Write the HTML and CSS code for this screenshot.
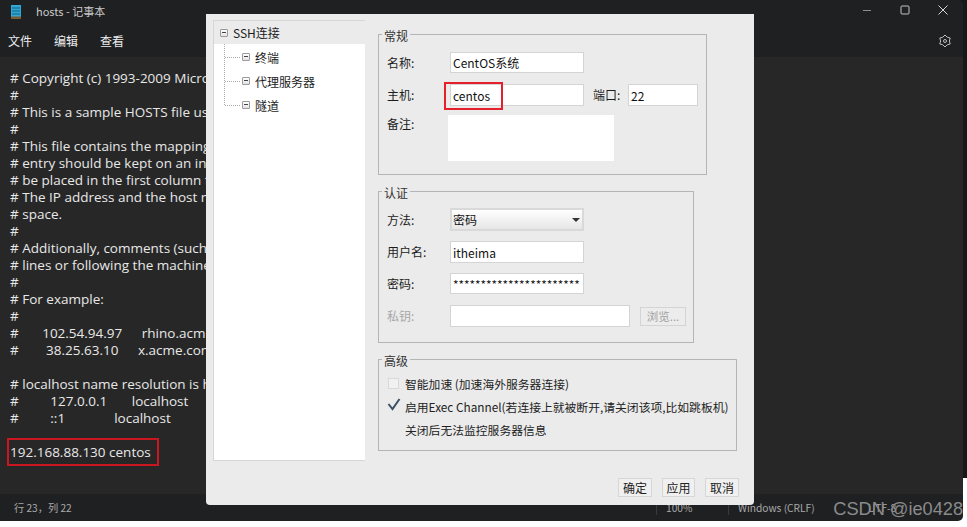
FILE: index.html
```html
<!DOCTYPE html>
<html lang="zh">
<head>
<meta charset="utf-8">
<title>hosts - 记事本</title>
<link rel="stylesheet" href="styles.css">
</head>
<body>
<div class="screen">
  <div class="behind"></div>
  <div class="notepad">
    <header class="titlebar">
      <svg class="app-icon" width="10" height="14" viewBox="0 0 10 14"><rect x="0" y="0" width="10" height="14" fill="#2fa8d8"/><rect x="0" y="11.500" width="10" height="2.500" fill="#7a5a32"/><path d="M1 3h8M1 6h8M1 9h8" stroke="#135f7e" stroke-width="1"/></svg>
      <span class="title">hosts - 记事本</span>
      <div class="winctl">
        <svg width="12" height="12" viewBox="0 0 12 12"><path d="M2 6.500h8" stroke="#8d8d8d"/></svg>
        <svg width="12" height="12" viewBox="0 0 12 12"><rect x="2" y="2" width="8" height="8" rx="1" fill="none" stroke="#c4c4c4"/></svg>
        <svg width="12" height="12" viewBox="0 0 12 12"><path d="M1.500 1.500l9 9M10.500 1.500l-9 9" stroke="#d8d8d8"/></svg>
      </div>
    </header>
    <nav class="menubar">
      <span>文件</span><span>编辑</span><span>查看</span>
      <svg class="gear" width="14" height="14" viewBox="0 0 14 14"><path d="M7 1L9.200 3.200 12.200 4 11.400 7 12.200 10 9.200 10.800 7 13 4.800 10.800 1.800 10 2.600 7 1.800 4 4.800 3.200z" fill="none" stroke="#bdbdbd" stroke-linejoin="round"/><circle cx="7" cy="7" r="1.500" fill="none" stroke="#bdbdbd"/></svg>
    </nav>
    <main class="editor"><pre class="text"># Copyright (c) 1993-2009 Microsoft Corp.
#
# This is a sample HOSTS file used by Microsoft TCP/IP for Windows.
#
# This file contains the mappings of IP addresses to host names. Each
# entry should be kept on an individual line. The IP address should
# be placed in the first column followed by the corresponding host name.
# The IP address and the host name should be separated by at least one
# space.
#
# Additionally, comments (such as these) may be inserted on individual
# lines or following the machine name denoted by a '#' symbol.
#
# For example:
#
<span class="sample">#      102.54.94.97     rhino.acme.com          # source server
#       38.25.63.10     x.acme.com              # x client host</span>

# localhost name resolution is handled within DNS itself.
#         127.0.0.1       localhost
#         ::1              localhost

<span class="mark">192.168.88.130 centos</span></pre></main>
    <footer class="statusbar">
      <span class="pos">行 23，列 22</span>
      <span class="cell zoom">100%</span>
      <span class="cell crlf">Windows (CRLF)</span>
      <span class="cell enc">UTF-8</span>
    </footer>
  </div>

  <section class="dialog">
    <div class="dialog-top">
      <aside class="tree">
        <div class="tree-root"><i class="box"></i>SSH连接</div>
        <ul class="tree-list">
          <li><i class="box"></i>终端</li>
          <li><i class="box"></i>代理服务器</li>
          <li><i class="box"></i>隧道</li>
        </ul>
      </aside>
      <div class="forms">
        <fieldset class="group general">
          <legend>常规</legend>
          <div class="row r-name"><label>名称:</label><div class="input w134">CentOS系统</div></div>
          <div class="row r-host"><label>主机:</label><div class="input w134 host">centos<span class="redbox"></span></div><label class="port-label">端口:</label><div class="input w70">22</div></div>
          <div class="row r-note"><label>备注:</label><div class="note"></div></div>
        </fieldset>
        <fieldset class="group auth">
          <legend>认证</legend>
          <div class="row r-method"><label>方法:</label><div class="input w134 select">密码<span class="caret"></span></div></div>
          <div class="row r-user"><label>用户名:</label><div class="input w134">itheima</div></div>
          <div class="row r-pass"><label>密码:</label><div class="input w134 pass">***********************</div></div>
          <div class="row r-key"><label class="off">私钥:</label><div class="input w180"></div><button class="browse">浏览...</button></div>
        </fieldset>
        <fieldset class="group adv">
          <legend>高级</legend>
          <div class="check"><span class="cb"></span>智能加速 (加速海外服务器连接)</div>
          <div class="check"><span class="cb on"><svg width="14" height="13" viewBox="0 0 14 13"><path d="M1.500 6l4 5 7-10" fill="none" stroke="#3b5066" stroke-width="2"/></svg></span>启用Exec Channel(若连接上就被断开,请关闭该项,比如跳板机)</div>
          <div class="check plain">关闭后无法监控服务器信息</div>
        </fieldset>
      </div>
    </div>
    <div class="actions"><button class="wide">确定</button><button>应用</button><button class="wide">取消</button></div>
  </section>

  <div class="watermark">CSDN @ie0428</div>
</div>
</body>
</html>
```
FILE: styles.css
```css
* { box-sizing: border-box; }
html, body { margin: 0; padding: 0; background: #fff; }
.screen { position: relative; width: 967px; height: 527px; overflow: hidden; background: #fff; font-family: "Noto Sans CJK SC", "Noto Sans", sans-serif; }
.behind { position: absolute; left: 955px; top: 0; width: 12px; height: 478px; background: #17181a; }

.notepad { position: relative; width: 963px; height: 521px; display: flex; flex-direction: column; background: #1f2022; color: #e6e6e6; border-radius: 0 5px 5px 0; overflow: hidden; }
.titlebar { height: 24px; flex: none; display: flex; align-items: center; padding-left: 11px; }
.app-icon { flex: none; margin-bottom: 1px; }
.title { margin-left: 15px; margin-bottom: 2px; font-size: 11px; color: #c9c9c9; }
.winctl { margin-left: auto; display: flex; gap: 26px; padding-right: 14px; margin-bottom: 4px; }
.menubar { height: 33px; flex: none; display: flex; align-items: center; gap: 22px; padding: 0 11px 0 8px; font-size: 12px; color: #ececec; }
.gear { margin-left: auto; }
.editor { flex: 1; background: #272727; padding: 13px 10px 0; overflow: hidden; }
.text { margin: 0; font-family: "Open Sans", "Noto Sans", sans-serif; font-size: 13.5px; line-height: 17px; color: #e8e8e8; white-space: pre; }
.sample { word-spacing: 0.4px; }
.mark { display: inline-block; position: relative; }
.mark::after { content: ""; position: absolute; left: -3px; top: -6px; width: 148px; height: 24px; border: 2px solid #c9161f; }
.statusbar { height: 27px; flex: none; display: flex; align-items: center; padding-left: 14px; font-size: 10.2px; color: #a9a9a9; }
.pos { width: 642px; }
.cell { border-left: 1px solid #3a3a3a; }
.zoom { padding-left: 9px; width: 72px; }
.crlf { padding-left: 9px; width: 140px; }
.enc { border: 0; }

.dialog { position: absolute; left: 206px; top: 14px; width: 548px; height: 491px; background: #ebebeb; border-radius: 0 0 4px 4px; color: #1c1c1c; font-size: 12px; padding: 6px 0 0 7px; display: flex; flex-direction: column; }
.dialog-top { display: flex; height: 441px; flex: none; }
.tree { width: 152px; flex: none; background: #fff; border-left: 1px solid #d6d6d6; border-top: 1px solid #d6d6d6; border-bottom: 1px solid #d6d6d6; }
.tree-root { height: 23px; background: #ebebeb; display: flex; align-items: center; padding-left: 6px; gap: 5px; }
.tree-list { list-style: none; margin: 0 0 0 10px; padding: 1px 0 0 17px; border-left: 1px dotted #aaa; height: 61px; display: flex; flex-direction: column; }
.tree-list li { height: 24px; flex: none; display: flex; align-items: center; gap: 5px; position: relative; }
.tree-list li::before { content: ""; position: absolute; left: -17px; top: 12px; width: 15px; border-top: 1px dotted #aaa; }
.box { width: 8px; height: 8px; flex: none; border: 1px solid #9b9b9b; border-radius: 1px; background: linear-gradient(#fff, #e2e2e2); position: relative; }
.box::after { content: ""; position: absolute; left: 1px; right: 1px; top: 2px; border-top: 1px solid #444; }

.forms { flex: 1; padding: 4px 0 0 13px; }
.group { margin: 0; padding: 0; border: 1px solid #b5b5b5; display: block; }
.group legend { font-size: 12px; padding: 4px 2px 0; margin-left: -5px; line-height: 16px; color: #333; }
.general { width: 329px; height: 151px; padding-left: 8px; }
.auth { width: 316px; height: 162px; margin-top: 6px; padding-left: 8px; }
.adv { width: 359px; height: 102px; margin-top: 6px; padding: 3px 0 0 9px; }
.adv legend { margin-left: -6px; }
.row { display: flex; align-items: center; }
.row label { width: 63px; flex: none; line-height: 18px; }
.row label.off { color: #a8a8a8; }
.input { height: 22px; background: #fff; border: 1px solid #d4d4d4; padding-left: 2px; display: flex; align-items: center; position: relative; font-size: 12px; color: #111; }
.w134 { width: 134px; }
.w70 { width: 70px; }
.w180 { width: 180px; }
.r-name { margin-top: 8px; }
.r-name .input { height: 21px; }
.r-host { margin-top: 11px; }
.row .port-label { width: 35px; margin-left: 9px; }
.redbox { position: absolute; left: -7px; top: -3px; width: 59px; height: 28px; border: 2px solid #e5202a; }
.r-note { margin-top: 9px; align-items: flex-start; }
.note { width: 166px; height: 46px; background: #fff; margin-left: -2px; }
.r-method { margin-top: 7px; }
.select { height: 23px; background: linear-gradient(#fff, #e6e6e6); border-width: 2px; border-color: #d9d9d9; padding-left: 1px; }
.caret { position: absolute; right: 2px; top: 8px; border: 4px solid transparent; border-top: 4px solid #333; border-bottom: 0; }
.r-user { margin-top: 10px; }
.r-pass { margin-top: 10px; }
.pass { height: 21px; font-size: 11.8px; }
.r-key { margin-top: 11px; }
.browse { width: 46px; height: 19px; margin-left: 10px; padding: 0; border: 1px solid #d4d4d4; background: #ececec; font: inherit; font-size: 11.5px; color: #a0a0a0; }
.check { display: flex; align-items: center; height: 23px; font-size: 11.8px; color: #222; white-space: nowrap; }
.check.plain { padding-left: 17px; }
.cb { width: 11px; height: 11px; flex: none; margin-right: 6px; background: #f1f1f1; border: 1px solid #d9d9d9; position: relative; }
.cb.on { background: none; border: 0; }
.cb.on svg { position: absolute; left: -1px; top: -3px; }
.actions { display: flex; justify-content: flex-end; gap: 10px; padding: 17px 15px 0 0; }
.actions button { width: 33px; height: 19px; padding: 0; border: 1px solid #d6d6d6; background: #f0f0f0; font: inherit; font-size: 12px; color: #222; }
.actions .wide { width: 34px; }

.watermark { position: absolute; right: 4px; top: 497px; font-family: "Liberation Sans", sans-serif; font-size: 18.2px; line-height: 24px; color: #8a8a8a; }
```
